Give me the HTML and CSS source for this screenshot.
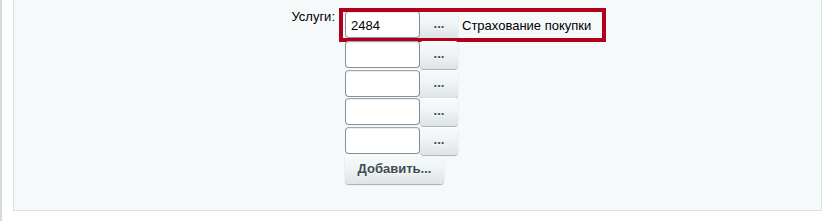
FILE: index.html
```html
<!DOCTYPE html>
<html lang="ru">
<head>
    <meta charset="UTF-8">
    <title>Услуги</title>
    <link rel="stylesheet" href="styles.css">
</head>
<body>
<div class="page">
    <div class="edge"></div>
    <div class="panel">
        <div class="field">
            <div class="label">Услуги:</div>
            <div class="values">
                <div class="row first">
                    <input class="inp" type="text" value="2484">
                    <button class="btn dots">...</button>
                    <span class="name">Страхование покупки</span>
                    <div class="mark"></div>
                </div>
                <div class="row">
                    <input class="inp" type="text">
                    <button class="btn dots">...</button>
                </div>
                <div class="row">
                    <input class="inp" type="text">
                    <button class="btn dots">...</button>
                </div>
                <div class="row">
                    <input class="inp" type="text">
                    <button class="btn dots">...</button>
                </div>
                <div class="row">
                    <input class="inp" type="text">
                    <button class="btn dots">...</button>
                </div>
                <button class="btn add">Добавить...</button>
            </div>
        </div>
    </div>
</div>
</body>
</html>
```

FILE: styles.css
```css
*{
    margin: 0;
    padding: 0;
    box-sizing: border-box;
}
body{
    background: #fff;
    font-family: "Liberation Sans", Arial, sans-serif;
    font-size: 13px;
    color: #000;
}
.page{
    display: flex;
    height: 221px;
}
.edge{
    width: 2px;
    height: 100%;
    background-color: #d5dce1;
}
.panel{
    margin-left: 11px;
    width: 809px;
    height: 211px;
    background-color: #f5f9f9;
    border: 1px solid #d9e2e7;
    border-top: none;
    padding-top: 11px;
}
.field{
    display: flex;
    gap: 10px;
}
.label{
    width: 321px;
    text-align: right;
    line-height: 15px;
    margin-top: -2px;
    color: #000;
}
.values{
    display: flex;
    flex-direction: column;
}
.row{
    display: flex;
    align-items: flex-start;
    height: 28.5px;
    position: relative;
}
.row.first{
    height: 30px;
}
.inp{
    width: 75px;
    height: 27px;
    border: 1px solid #87919c;
    border-top-color: #a0a7ae;
    border-radius: 4px;
    background: #fff;
    box-shadow: inset 0 1px 1px rgba(0, 0, 0, 0.08);
    font-family: "Liberation Sans", Arial, sans-serif;
    font-size: 13px;
    padding: 2px 5px 0;
    color: #000;
    outline: none;
}
.btn{
    border: none;
    border-radius: 4px;
    background: linear-gradient(#f8fafa, #f1f5f5 40%, #dde4e6);
    box-shadow: 0 0 1px rgba(0, 0, 0, 0.11), 0 1px 1px rgba(0, 0, 0, 0.3), inset 0 1px #fff;
    font-family: "Liberation Sans", Arial, sans-serif;
    font-weight: bold;
    font-size: 13px;
    color: #3f4b54;
    text-shadow: 0 1px rgba(255, 255, 255, 0.7);
}
.dots{
    width: 38px;
    height: 28px;
    padding-bottom: 3px;
}
.name{
    margin-left: 4px;
    line-height: 27px;
    padding-top: 1px;
}
.add{
    width: 99px;
    height: 29px;
    padding-bottom: 2px;
}
.mark{
    position: absolute;
    left: -6px;
    top: -3px;
    width: 267px;
    height: 34px;
    border: 4px solid #b2001c;
}
```
